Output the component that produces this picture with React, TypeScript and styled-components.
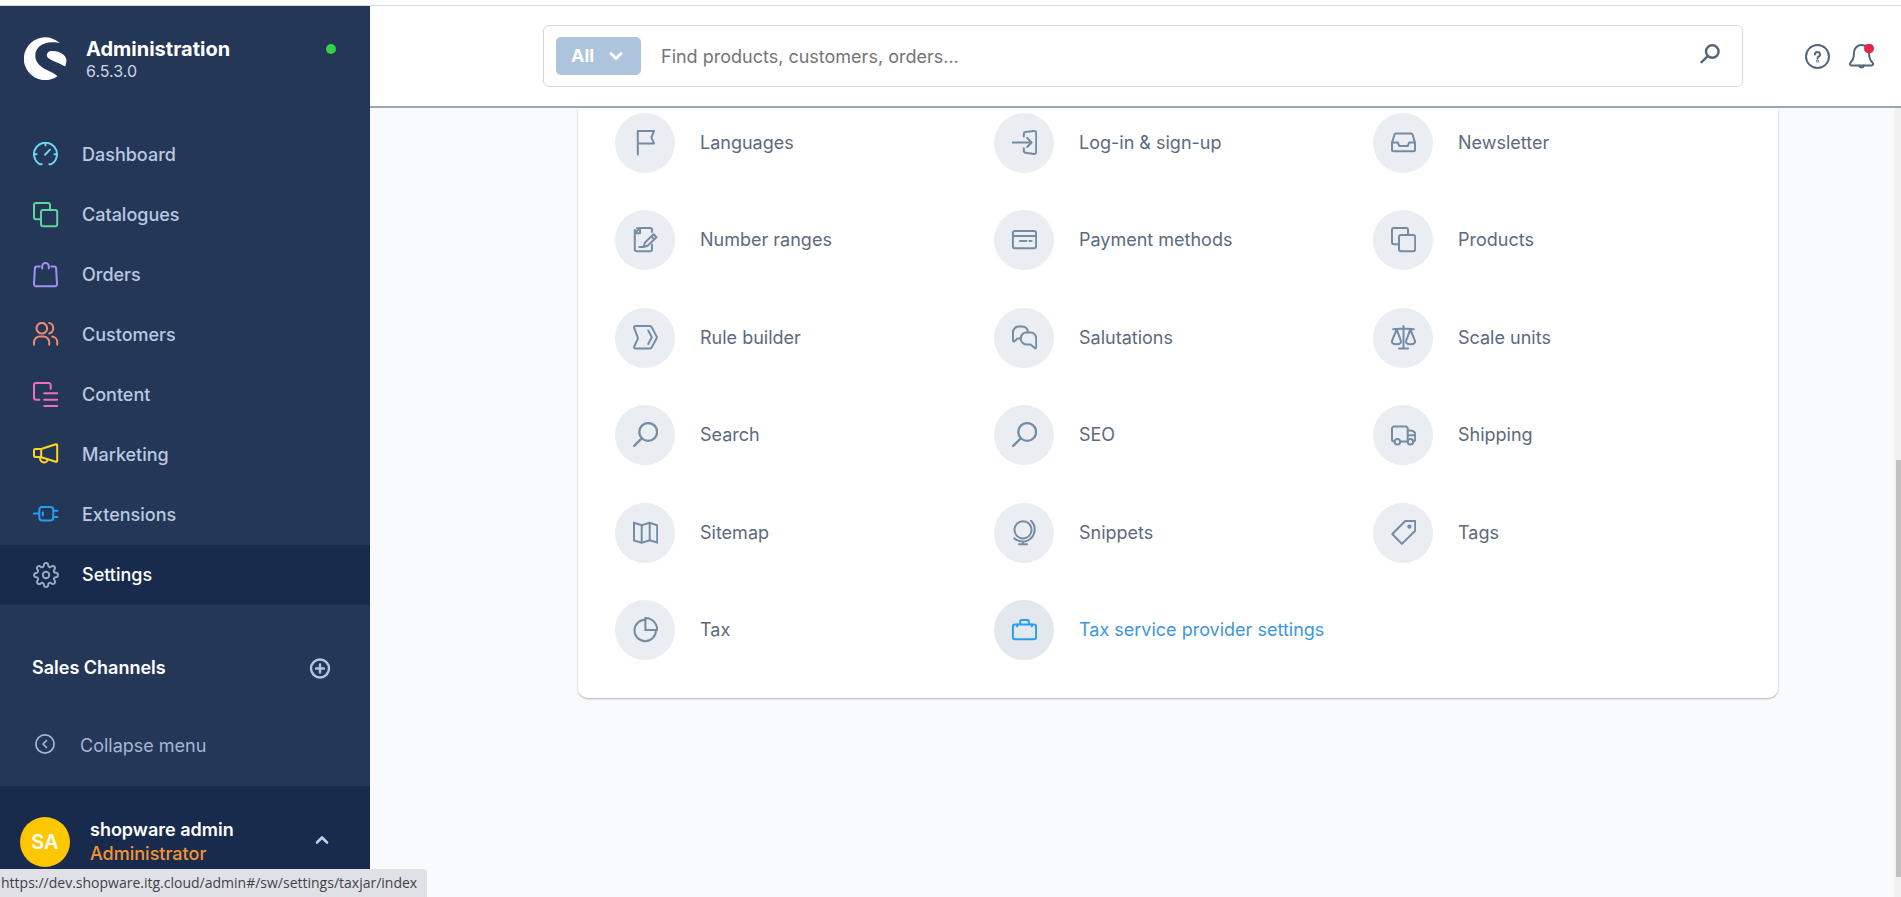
import React from "react";
import styled, { createGlobalStyle, css } from "styled-components";
import { FiSettings } from "react-icons/fi";

const GlobalStyle = createGlobalStyle`
  *, *::before, *::after { box-sizing: border-box; }
  html, body, #root { height: 100%; }
  body {
    margin: 0;
    background: #fff;
    font-family: Inter, "Liberation Sans", sans-serif;
    font-size: 18px;
    line-height: 24px;
    overflow: hidden;
  }
  button, input { font: inherit; }
  button { padding: 0; border: 0; background: none; cursor: pointer; }
  a { text-decoration: none; }
`;

/* ---------- icons ---------- */

const Glyph = styled.svg<{ $weight?: number }>`
  display: block;
  flex: none;
  fill: none;
  stroke: currentColor;
  stroke-width: ${(p) => p.$weight ?? 2};
  stroke-linecap: round;
  stroke-linejoin: round;
`;

const SquaresPath = () => (
  <>
    <path d="M8 17.200H3a2 2 0 0 1-2-2V3a2 2 0 0 1 2-2h12a2 2 0 0 1 2 2v4.800" />
    <rect x="8" y="8" width="16.200" height="16.200" rx="2" />
  </>
);

const SearchPath = () => (
  <g strokeWidth="2.300">
    <circle cx="15.200" cy="9.900" r="8.900" />
    <path d="M8.700 16.400L1.200 23.900" />
  </g>
);

const drawings = {
  dashboard: (
    <>
      <path d="M8.700 22.300H7A11.500 11.500 0 1 1 18 22.300H16.300" />
      <path d="M12.500 1v2.400M1.200 12.200h2.400M23.800 12.200h-2.400M12 12.800l5-5.200" />
    </>
  ),
  squares: <SquaresPath />,
  bag: (
    <>
      <path d="M6.800 4.500H3.900a2 2 0 0 0-2 1.900L1 22.100a2 2 0 0 0 2 2.100h19a2 2 0 0 0 2-2.100l-.9-15.700a2 2 0 0 0-2-1.900h-2.900" />
      <path d="M9.200 6.500V4.300a3.300 3.300 0 0 1 6.600 0v2.200" />
    </>
  ),
  people: (
    <>
      <circle cx="8.800" cy="6.200" r="5.300" />
      <path d="M16.200 .9a5.500 5.500 0 0 1 0 10.600" />
      <path d="M1 22.800v-2.600a5.700 5.700 0 0 1 5.700-5.700h3.800a5.700 5.700 0 0 1 5.700 5.700v2.600" />
      <path d="M19.200 14.600a5.500 5.500 0 0 1 5 5.600v2.600" />
    </>
  ),
  content: (
    <>
      <path d="M6.500 17.700H3a2 2 0 0 1-2-2V3a2 2 0 0 1 2-2h12.700a2 2 0 0 1 2 2v3.700" />
      <path d="M11.200 11.200h13M11.200 17.700h13M11.200 24.100h13" />
    </>
  ),
  horn: (
    <>
      <path d="M8.200 7L22.900 2.200a1 1 0 0 1 1.300 1v15.600a1 1 0 0 1-1.300 1L8.200 15.200z" />
      <path d="M8.200 7H2.500A1.500 1.500 0 0 0 1 8.500v4.900a1.500 1.500 0 0 0 1.500 1.500h5.700" />
      <path d="M7.200 15.300a4 4 0 0 0 7.700 2.200" />
    </>
  ),
  plug: (
    <>
      <rect x="6.300" y="5" width="14" height="13.600" rx="3" />
      <path d="M.8 11.600h5.500M20.300 8.700h4.200M20.300 15h4.200M9.800 10.200v3.200" />
    </>
  ),
  flag: <path d="M4.800 24.500V1H21l-2.600 6.300L21 13.400H4.800" />,
  login: (
    <>
      <path d="M11.800 6.600V3.900a2 2 0 0 1 1.800-2l8.400-.9a2 2 0 0 1 2.200 2v19a2 2 0 0 1-2.200 2l-8.400-1.300a2 2 0 0 1-1.800-2v-2.400" />
      <path d="M.8 12.500h18.600M15.200 8l4.400 4.500-4.400 4.500" />
    </>
  ),
  inbox: (
    <>
      <path d="M4.900 3.500h15.200a1.500 1.500 0 0 1 1.500 1.200l2.400 8v7.100a1.500 1.500 0 0 1-1.500 1.500h-20A1.500 1.500 0 0 1 1 19.800v-7.100l2.400-8a1.500 1.500 0 0 1 1.500-1.200z" />
      <path d="M1.200 12.500h5.500l1.600 3.500h8.400l1.600-3.500h5.500" />
    </>
  ),
  note: (
    <>
      <path d="M19 5V3a2 2 0 0 0-2-2H7L1.800 6.200v16a2 2 0 0 0 2 2H17a2 2 0 0 0 2-2v-4.600M4 1.200h4M1.800 3v4" />
      <path d="M7 1.200v5H2" />
      <path d="M10.500 20l1.300-4.300 8.700-8.500 3 3-8.900 8.600zM6.200 20h4.300M18.300 9.400l3 3" />
    </>
  ),
  card: (
    <>
      <rect x=".9" y="3.900" width="23.200" height="17.300" rx="2" />
      <path d="M1 8.900h23M8 13.900h6.400M17.400 13.900h2.200" />
    </>
  ),
  rule: (
    <>
      <path d="M2.500 1h14.400a2 2 0 0 1 1.700 1l5 9.400a2 2 0 0 1 0 1.800l-5 9.400a2 2 0 0 1-1.700 1H2.500a1.400 1.400 0 0 1-1.300-2l3.500-7.500a2 2 0 0 0 0-1.700L1.200 3a1.400 1.400 0 0 1 1.300-2z" />
      <path d="M15.200 5.500l3.700 6.800-3.700 6.800" />
    </>
  ),
  chat: (
    <>
      <path d="M16 7.200a5.600 5.600 0 0 0-5.500-5.600H6.600A5.600 5.600 0 0 0 1 7.200v8.300a.9.9 0 0 0 1.500.7l3-2.700H8.500" />
      <path d="M14.300 7.600h4.400a5.500 5.500 0 0 1 5.500 5.500v9.300a.9.9 0 0 1-1.500.7L18.500 19.400h-4.200a5.500 5.500 0 0 1-5.500-5.500v-.8a5.500 5.500 0 0 1 5.500-5.500z" />
    </>
  ),
  scale: (
    <>
      <path d="M12.500 1v22.500M8 23.600h9M2.200 4.200l10.300-.7 10.300.7" />
      <path d="M5.700 4.400L1 15.800a2 2 0 0 0 .4 2c1.500 2 6.600 2 8.200 0a2 2 0 0 0 .3-2z" />
      <path d="M19.300 4.400l-4.200 11.400a2 2 0 0 0 .3 2c1.600 2 6.700 2 8.200 0a2 2 0 0 0 .4-2z" />
    </>
  ),
  search: <SearchPath />,
  truck: (
    <>
      <path d="M3.500 19.400H3a2 2 0 0 1-2-2V6.500a2 2 0 0 1 2-2h11.700a2 2 0 0 1 2 2v12.900H9.300" />
      <path d="M16.700 8.400h3.100a4.400 4.400 0 0 1 4.400 4.400v4.600a2 2 0 0 1-2 2M17 13.200h7" />
      <circle cx="6.400" cy="19.700" r="2.800" />
      <circle cx="19.400" cy="19.700" r="2.800" />
    </>
  ),
  map: (
    <g strokeLinejoin="miter">
      <path d="M1 2.800l7.700 2.400L16.700 2.800l7.500 2.400v17.200l-7.500-2.200-8 2.500L1 20.400z" />
      <path d="M8.700 5.200v17.200M16.700 2.800v17.200" />
    </g>
  ),
  globe: (
    <>
      <circle cx="11" cy="9.800" r="8.600" />
      <path d="M19 .8A12 12 0 0 1 2.300 18.200M11 21.500v2.800M7 24.300h8" />
    </>
  ),
  tag: (
    <>
      <path d="M14.300 1h9.900v9.700L10.900 23.900 1.300 14z" />
      <circle cx="18.400" cy="6.600" r="1.200" fill="currentColor" />
    </>
  ),
  pie: (
    <g strokeLinejoin="miter">
      <path d="M12.400 1v12h11.800A11.900 11.900 0 0 0 12.400 1z" />
      <path d="M12.400 2.800a10.700 10.700 0 1 0 10.500 10.600" />
    </g>
  ),
  briefcase: (
    <>
      <rect x=".9" y="7.400" width="23.200" height="14.800" rx="2" />
      <path d="M8.200 7.200V4.500a1.500 1.500 0 0 1 1.500-1.500h5.600a1.500 1.500 0 0 1 1.500 1.500v2.700M5.200 7.500v2M19.800 7.500v2" />
    </>
  ),
};

type IconName = keyof typeof drawings;

const Icon = ({ name, shift = 0 }: { name: IconName; shift?: number }) => (
  <Glyph width="26" height="26" viewBox={`${-shift} 0 26 26`} aria-hidden="true">
    {drawings[name]}
  </Glyph>
);

const Chevron = ({ up, weight }: { up?: boolean; weight: number }) => (
  <Glyph $weight={weight} width="14" height="14" viewBox="0 0 14 14" aria-hidden="true">
    <path d={up ? "M2 9.500l5-5 5 5" : "M2 4.500l5 5 5-5"} />
  </Glyph>
);

const Logo = () => (
  <svg width="43" height="43" viewBox="0 0 43 43" aria-hidden="true">
    <path
      fill="#fff"
      d="M35.500 5.800A21.400 21.400 0 1 0 33.500 39.300C30 35.700 23.500 33.800 18.500 30.500 14 27.500 11.300 23.800 11.300 18.500 11.300 10 19.500 4.800 29 5.200 31.500 5.300 33.800 5.500 35.500 5.800ZM42.400 22.500C41.600 19 38.500 14.500 28.500 14 24.500 13.900 22.700 16 22.800 18.500 23 22.500 33 24.500 41 29.500 42 27.500 42.500 25 42.400 22.500Z"
    />
  </svg>
);

/* ---------- frame ---------- */

const Frame = styled.div`
  display: flex;
  height: 100vh;
  padding-top: 6px;
  background: linear-gradient(#fff 5px, #d5dade 5px, #d5dade 6px, #fff 6px);
`;

const Sidebar = styled.aside`
  flex: none;
  display: flex;
  flex-direction: column;
  width: 370px;
  background: #253757;
  color: #b9c9e0;
`;

const Brand = styled.div`
  display: flex;
  align-items: flex-start;
  gap: 19px;
  height: 119px;
  padding: 31px 34px 0 24px;
`;

const BrandText = styled.div`
  flex: 1;
`;

const BrandName = styled.div`
  color: #fff;
  font-size: 20px;
  font-weight: 700;
`;

const Version = styled.div`
  font-size: 16px;
  line-height: 20px;
  color: #c9d6e8;
`;

const Online = styled.span`
  width: 10px;
  height: 10px;
  margin-top: 7px;
  border-radius: 50%;
  background: #37d046;
`;

const NavLink = styled.a<{ $tint: string; $active?: boolean }>`
  display: flex;
  align-items: center;
  gap: 23px;
  height: 60px;
  padding-left: 33px;
  color: #b9c9e0;
  font-weight: 500;
  svg { color: ${(p) => p.$tint}; }
  ${(p) =>
    p.$active &&
    css`
      background: #182b4c;
      color: #fff;
    `}
`;

const Channels = styled.div`
  display: flex;
  align-items: center;
  justify-content: space-between;
  margin-top: 48px;
  padding: 0 39px 0 32px;
  height: 30px;
  color: #fff;
  font-weight: 600;
`;

const RoundButton = styled.button`
  display: flex;
  color: #b3c5e0;
`;

const Collapse = styled.button`
  display: flex;
  align-items: center;
  gap: 25px;
  height: 80px;
  margin-top: auto;
  padding-left: 35px;
  color: #a3b6d2;
`;

const UserBar = styled.button`
  display: flex;
  align-items: flex-start;
  gap: 20px;
  height: 111px;
  padding: 31px 41px 0 20px;
  background: #182b4c;
  color: #c3d0e4;
  text-align: left;
  > svg { margin-top: 16px; }
`;

const Avatar = styled.span`
  display: grid;
  place-items: center;
  width: 50px;
  height: 50px;
  border-radius: 50%;
  background: #ffc700;
  color: #fff;
  font-weight: 600;
  font-size: 20px;
`;

const UserText = styled.span`
  flex: 1;
  display: flex;
  flex-direction: column;
  padding-top: 1px;
`;

const UserName = styled.span`
  color: #fff;
  font-weight: 600;
`;

const UserRole = styled.span`
  color: #f59433;
  font-weight: 500;
`;

/* ---------- main area ---------- */

const Main = styled.main`
  flex: 1;
  min-width: 0;
  display: flex;
  flex-direction: column;
`;

const TopBar = styled.header`
  flex: none;
  display: flex;
  align-items: flex-start;
  height: 102px;
  padding: 19px 26px 0 173px;
  border-bottom: 2px solid #9aa6b2;
  background: #fff;
`;

const SearchBox = styled.label`
  flex: 1;
  display: flex;
  align-items: center;
  gap: 20px;
  height: 62px;
  margin-right: 61px;
  padding: 0 22px 0 12px;
  border: 1px solid #d1d9e0;
  border-radius: 6px;
  color: #52667a;
  > svg { margin-bottom: 4px; }
`;

const ScopeButton = styled.button`
  display: flex;
  align-items: center;
  justify-content: space-between;
  width: 85px;
  height: 38px;
  padding: 0 18px 0 15px;
  border-radius: 5px;
  background: #aec3dc;
  color: #fff;
  font-weight: 700;
`;

const SearchInput = styled.input`
  flex: 1;
  min-width: 0;
  padding: 2px 0 0;
  border: 0;
  outline: 0;
  background: none;
  color: #52667a;
  &::placeholder { color: #757575; opacity: 1; }
`;

const Actions = styled.div`
  display: flex;
  gap: 19px;
  padding-top: 19px;
  color: #52667a;
`;

const ActionButton = styled.button`
  display: flex;
  color: inherit;
`;

const Body = styled.div`
  flex: 1;
  min-height: 0;
  display: flex;
  background: #f9fafc;
`;

const Scroller = styled.div`
  flex: 1;
  min-width: 0;
  padding: 0 116px 0 208px;
  overflow: hidden;
`;

const Card = styled.section`
  display: grid;
  grid-template-columns: repeat(3, 1fr);
  grid-auto-rows: 97px 98px;
  column-gap: 11px;
  align-items: start;
  padding: 5px 37px 0;
  border-radius: 0 0 10px 10px;
  background: #fff;
  box-shadow: 0 1px 2px rgba(30, 45, 65, 0.35);
`;

const Setting = styled.a<{ $active?: boolean }>`
  display: flex;
  align-items: center;
  gap: 25px;
  color: ${(p) => (p.$active ? "#3e97dc" : "#5c6a7e")};
`;

const Disc = styled.span<{ $active?: boolean }>`
  flex: none;
  display: grid;
  place-items: center;
  width: 60px;
  height: 60px;
  border-radius: 50%;
  background: ${(p) => (p.$active ? "#e3e7ee" : "#eaedf2")};
  color: ${(p) => (p.$active ? "#2a9df0" : "#758ca3")};
`;

const ScrollTrack = styled.div`
  flex: none;
  display: flex;
  flex-direction: column;
  width: 7px;
  padding: 20px 0 20px 2px;
  background: #f1f1f1;
`;

const TrackGap = styled.div`
  flex: 332;
`;

const ScrollThumb = styled.div`
  flex: 417;
  background: #c1c1c1;
`;

const StatusBubble = styled.div`
  position: fixed;
  left: 0;
  bottom: 0;
  height: 28px;
  padding: 0 10px 0 1px;
  border-top-right-radius: 4px;
  background: #dfe1e6;
  color: #3f4246;
  font: 14px/28px "Open Sans", "Noto Sans", sans-serif;
  white-space: nowrap;
`;

/* ---------- data ---------- */

const navigation: { label: string; icon: IconName; tint: string }[] = [
  { label: "Dashboard", icon: "dashboard", tint: "#6ed5f0" },
  { label: "Catalogues", icon: "squares", tint: "#5fd3a4" },
  { label: "Orders", icon: "bag", tint: "#a092f0" },
  { label: "Customers", icon: "people", tint: "#ee8a70" },
  { label: "Content", icon: "content", tint: "#f06fbd" },
  { label: "Marketing", icon: "horn", tint: "#ffd51f" },
  { label: "Extensions", icon: "plug", tint: "#2b9bf4" },
];

const settings: { label: string; icon: IconName; active?: boolean }[] = [
  { label: "Languages", icon: "flag" },
  { label: "Log-in & sign-up", icon: "login" },
  { label: "Newsletter", icon: "inbox" },
  { label: "Number ranges", icon: "note" },
  { label: "Payment methods", icon: "card" },
  { label: "Products", icon: "squares" },
  { label: "Rule builder", icon: "rule" },
  { label: "Salutations", icon: "chat" },
  { label: "Scale units", icon: "scale" },
  { label: "Search", icon: "search" },
  { label: "SEO", icon: "search" },
  { label: "Shipping", icon: "truck" },
  { label: "Sitemap", icon: "map" },
  { label: "Snippets", icon: "globe" },
  { label: "Tags", icon: "tag" },
  { label: "Tax", icon: "pie" },
  { label: "Tax service provider settings", icon: "briefcase", active: true },
];

export default function App() {
  return (
    <>
      <GlobalStyle />
      <Frame>
        <Sidebar>
          <Brand>
            <Logo />
            <BrandText>
              <BrandName>Administration</BrandName>
              <Version>6.5.3.0</Version>
            </BrandText>
            <Online />
          </Brand>
          <nav>
            {navigation.map((item) => (
              <NavLink key={item.label} href="#" $tint={item.tint}>
                <Icon name={item.icon} />
                {item.label}
              </NavLink>
            ))}
            <NavLink href="#" $tint="#9aaabf" $active aria-current="page">
              <FiSettings size={26} strokeWidth={1.8} aria-hidden="true" />
              Settings
            </NavLink>
          </nav>
          <Channels>
            Sales Channels
            <RoundButton aria-label="Add sales channel">
              <Glyph $weight={2.4} width="22" height="22" viewBox="0 0 22 22">
                <circle cx="11" cy="11.500" r="9" />
                <path d="M11 7.500v8M7 11.500h8" />
              </Glyph>
            </RoundButton>
          </Channels>
          <Collapse>
            <Glyph $weight={1.7} width="20" height="24" viewBox="0 0 20 24" aria-hidden="true">
              <circle cx="10" cy="10" r="9.100" />
              <path d="M11.500 6.500L8 10l3.500 3.500" />
            </Glyph>
            Collapse menu
          </Collapse>
          <UserBar>
            <Avatar>SA</Avatar>
            <UserText>
              <UserName>shopware admin</UserName>
              <UserRole>Administrator</UserRole>
            </UserText>
            <Chevron up weight={2.6} />
          </UserBar>
        </Sidebar>
        <Main>
          <TopBar>
            <SearchBox>
              <ScopeButton type="button">
                All
                <Chevron weight={3} />
              </ScopeButton>
              <SearchInput
                type="text"
                aria-label="Search"
                placeholder="Find products, customers, orders..."
              />
              <Glyph $weight={2.4} width="20" height="20" viewBox="0 0 20 20" aria-hidden="true">
                <circle cx="12.300" cy="7.500" r="6.300" />
                <path d="M7.700 12.200L1.600 18.200" />
              </Glyph>
            </SearchBox>
            <Actions>
              <ActionButton aria-label="Help">
                <Glyph width="26" height="26" viewBox="0 0 26 26">
                  <circle cx="13.500" cy="12.500" r="11.500" />
                  <path d="M11 10.500a2.500 2.500 0 1 1 3.700 2.200c-.8.400-1.200.8-1.200 1.700" />
                  <circle cx="13.500" cy="17.200" r=".4" />
                </Glyph>
              </ActionButton>
              <ActionButton aria-label="Notifications">
                <Glyph width="26" height="26" viewBox="0 0 26 26">
                  <path d="M12.500 1a7.500 7.500 0 0 0-7.500 7.500c0 6-1 8-3.500 10.200A1.500 1.500 0 0 0 2.500 21.400h20a1.500 1.500 0 0 0 1-2.700C21 16.500 20 14.500 20 8.500A7.500 7.500 0 0 0 12.500 1z" />
                  <path d="M10 21.600a2.600 2.600 0 0 0 5 0" />
                  <circle cx="20" cy="4.500" r="5" fill="#de294c" stroke="none" />
                </Glyph>
              </ActionButton>
            </Actions>
          </TopBar>
          <Body>
            <Scroller>
              <Card>
                {settings.map((item) => (
                  <Setting key={item.label} href="#" $active={item.active}>
                    <Disc $active={item.active}>
                      <Icon name={item.icon} shift={1} />
                    </Disc>
                    {item.label}
                  </Setting>
                ))}
              </Card>
            </Scroller>
            <ScrollTrack aria-hidden="true">
              <TrackGap />
              <ScrollThumb />
            </ScrollTrack>
          </Body>
        </Main>
      </Frame>
      <StatusBubble>https://dev.shopware.itg.cloud/admin#/sw/settings/taxjar/index</StatusBubble>
    </>
  );
}
